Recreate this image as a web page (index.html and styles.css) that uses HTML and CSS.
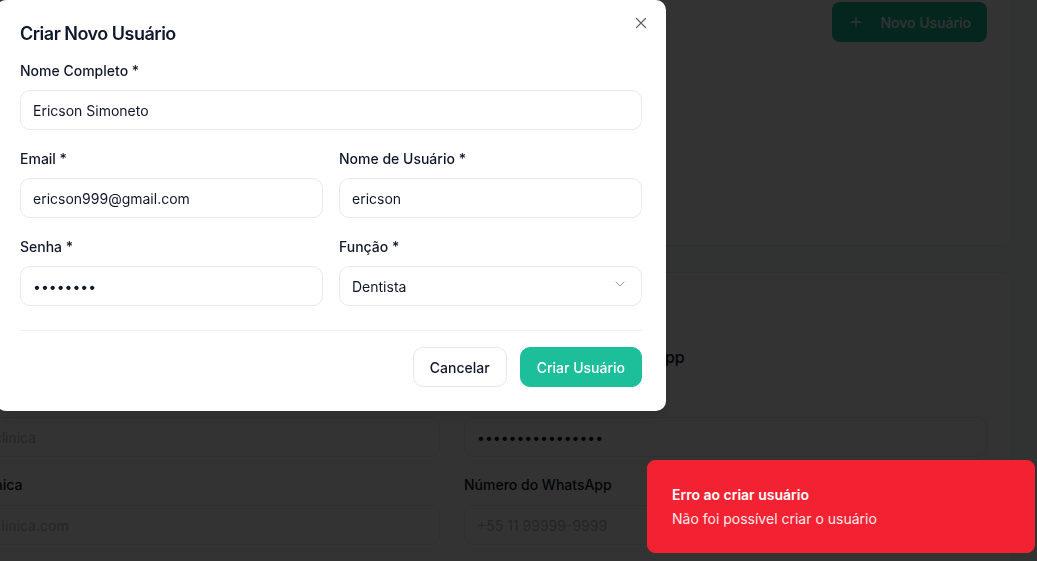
FILE: index.html
```html
<!DOCTYPE html>
<html lang="pt-BR">
<head>
<meta charset="utf-8">
<title>Usuários</title>
<link rel="stylesheet" href="styles.css">
</head>
<body>
<div class="page">
  <main class="main">
    <section class="card card-users">
      <div class="card-head">
        <div>
          <h2 class="card-title">Usuários</h2>
          <p class="card-desc">Gerencie os usuários da clínica</p>
        </div>
        <button class="bg-btn" type="button">
          <svg class="bg-btn-icon" viewBox="0 0 24 24"><path d="M5 12h14M12 5v14"/></svg>
          Novo Usuário
        </button>
      </div>
    </section>
    <section class="card card-settings">
      <div class="settings-head">
        <h2 class="card-title">Configurações da Clínica</h2>
        <p class="card-desc">Dados gerais e integrações</p>
      </div>
      <div class="settings-grid">
        <div class="col">
          <h3 class="sub-title">Dados da Clínica</h3>
          <label class="bg-label">Nome da Clínica</label>
          <input class="bg-input" placeholder="Nome da clinica">
          <label class="bg-label">Email da Clínica</label>
          <input class="bg-input" placeholder="contato@clinica.com">
        </div>
        <div class="col">
          <h3 class="sub-title">Configurações do WhatsApp</h3>
          <label class="bg-label">Token da API</label>
          <input class="bg-input" type="password" value="1234567890123456">
          <label class="bg-label">Número do WhatsApp</label>
          <input class="bg-input" placeholder="+55 11 99999-9999">
        </div>
      </div>
    </section>
  </main>
</div>

<div class="overlay"></div>

<div class="dialog" role="dialog" aria-labelledby="dlg-title">
  <button class="close" type="button" aria-label="Fechar">
    <svg viewBox="0 0 24 24"><path d="M18 6 6 18M6 6l12 12"/></svg>
  </button>
  <h2 class="dialog-title" id="dlg-title">Criar Novo Usuário</h2>
  <form class="form">
    <div class="field">
      <label class="label">Nome Completo *</label>
      <input class="input" value="Ericson Simoneto">
    </div>
    <div class="row">
      <div class="field">
        <label class="label">Email *</label>
        <input class="input" value="ericson999@gmail.com">
      </div>
      <div class="field">
        <label class="label">Nome de Usuário *</label>
        <input class="input" value="ericson">
      </div>
    </div>
    <div class="row">
      <div class="field">
        <label class="label">Senha *</label>
        <input class="input" type="password" value="12345678">
      </div>
      <div class="field">
        <label class="label">Função *</label>
        <button class="input select" type="button">
          <span>Dentista</span>
          <svg class="chevron" viewBox="0 0 24 24"><path d="m6 9 6 6 6-6"/></svg>
        </button>
      </div>
    </div>
    <div class="footer">
      <button type="button" class="btn btn-outline">Cancelar</button>
      <button type="button" class="btn btn-primary">Criar Usuário</button>
    </div>
  </form>
</div>

<div class="toast" role="status">
  <div class="toast-title">Erro ao criar usuário</div>
  <div class="toast-desc">Não foi possível criar o usuário</div>
</div>
</body>
</html>
```
FILE: styles.css
```css
* { box-sizing: border-box; }

html, body {
  margin: 0;
  height: 100%;
  overflow: hidden;
}

body {
  font-family: Inter, "Liberation Sans", Arial, sans-serif;
  color: #0f172a;
  background: #f5f7fa;
}

button, input {
  font-family: inherit;
}

.page {
  height: 100%;
}

.main {
  margin-top: -23px;
  margin-left: -108px;
  width: 1120px;
  display: flex;
  flex-direction: column;
  gap: 26px;
}

.card {
  background: #ffffff;
  border: 1px solid #e2e8f0;
  border-radius: 10px;
  padding: 24px;
}

.card-users {
  height: 269px;
}

.card-head {
  display: flex;
  justify-content: space-between;
  align-items: flex-start;
}

.card-title {
  margin: 0;
  font-size: 18px;
  line-height: 24px;
  font-weight: 600;
}

.card-desc {
  margin: 4px 0 0;
  font-size: 14px;
  line-height: 20px;
  color: #64748b;
}

.bg-btn {
  display: flex;
  align-items: center;
  gap: 16px;
  height: 40px;
  padding: 0 16px;
  border: none;
  border-radius: 8px;
  background: #1dbf9b;
  color: #ffffff;
  font-size: 14px;
  font-weight: 500;
}

.bg-btn-icon {
  width: 16px;
  height: 16px;
  fill: none;
  stroke: currentColor;
  stroke-width: 2;
  stroke-linecap: round;
}

.settings-head {
  height: 48px;
}

.settings-grid {
  display: grid;
  grid-template-columns: 1fr 1fr;
  gap: 24px;
}

.col {
  display: flex;
  flex-direction: column;
}

.sub-title {
  margin: 0 0 18px;
  font-size: 16px;
  line-height: 24px;
  font-weight: 500;
}

.bg-label {
  font-size: 14px;
  line-height: 20px;
  font-weight: 500;
  margin-bottom: 10px;
}

.bg-input {
  height: 40px;
  border: 1px solid #e2e8f0;
  border-radius: 10px;
  padding: 0 12px;
  font-size: 14px;
  color: #0f172a;
  background: #ffffff;
  margin-bottom: 18px;
}

.bg-input::placeholder {
  color: #b4bac2;
}

.overlay {
  position: fixed;
  inset: 0;
  background: rgba(0, 0, 0, 0.8);
}

.dialog {
  position: fixed;
  left: -4px;
  top: 0;
  width: 670px;
  padding: 24px;
  background: #ffffff;
  border-radius: 10px;
  box-shadow: 0 10px 15px -3px rgba(0,0,0,0.1), 0 4px 6px -4px rgba(0,0,0,0.1);
}

.close {
  position: absolute;
  top: 14px;
  right: 16px;
  width: 18px;
  height: 18px;
  padding: 0;
  border: none;
  background: none;
  color: #5d636b;
}

.close svg {
  width: 18px;
  height: 18px;
  display: block;
  fill: none;
  stroke: currentColor;
  stroke-width: 1.6;
  stroke-linecap: round;
}

.dialog-title {
  margin: 0;
  font-size: 18px;
  line-height: 19px;
  font-weight: 600;
  letter-spacing: -0.5px;
  color: #0f172a;
}

.form {
  margin-top: 18px;
  display: flex;
  flex-direction: column;
  gap: 19px;
}

.row {
  display: grid;
  grid-template-columns: 1fr 1fr;
  gap: 16px;
}

.field {
  display: flex;
  flex-direction: column;
}

.label {
  font-size: 14px;
  line-height: 20px;
  font-weight: 500;
  color: #0f172a;
  margin-bottom: 9px;
}

.input {
  width: 100%;
  height: 40px;
  border: 1px solid #e5eaf1;
  border-radius: 10px;
  padding: 0 12px;
  font-size: 14px;
  color: #0f172a;
  background: #ffffff;
  outline: none;
}

.select {
  display: flex;
  align-items: center;
  justify-content: space-between;
  text-align: left;
  padding-right: 13px;
}

.chevron {
  width: 16px;
  height: 16px;
  margin-top: -4px;
  fill: none;
  stroke: #0f172a;
  stroke-width: 1.5;
  stroke-linecap: round;
  stroke-linejoin: round;
  opacity: 0.45;
}

.footer {
  margin-top: 5px;
  border-top: 1px solid #edf1f6;
  padding-top: 16px;
  display: flex;
  justify-content: flex-end;
  gap: 13px;
}

.btn {
  height: 40px;
  padding: 0 16px;
  border-radius: 10px;
  font-size: 14px;
  font-weight: 500;
}

.btn-outline {
  background: #ffffff;
  border: 1px solid #e2e8f0;
  color: #0f172a;
}

.btn-primary {
  background: #1dbf9b;
  border: 1px solid #1dbf9b;
  color: #ffffff;
}

.toast {
  position: fixed;
  left: 647px;
  top: 460px;
  width: 388px;
  height: 93px;
  padding: 24px 32px 24px 24px;
  border: 1px solid #f22232;
  border-radius: 8px;
  background: #f22232;
  color: #ffffff;
  display: flex;
  flex-direction: column;
  gap: 4px;
}

.toast-title {
  font-size: 14px;
  line-height: 20px;
  font-weight: 600;
}

.toast-desc {
  font-size: 14px;
  line-height: 20px;
  opacity: 0.9;
}
```
